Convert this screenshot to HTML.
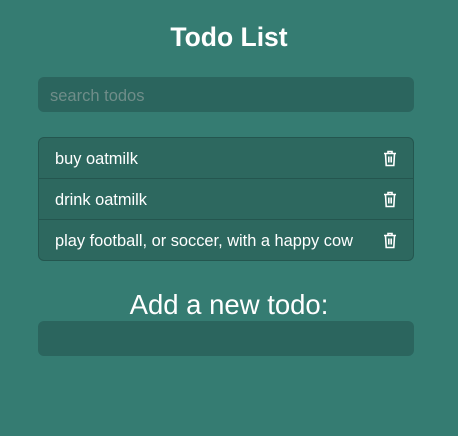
<!DOCTYPE html>
<html><head><style>
body{margin:0;width:458px;height:436px;background:#357c72;font-family:"Liberation Sans",sans-serif;color:#fff;position:relative;overflow:hidden}
h1{position:absolute;top:19px;left:0;width:458px;text-align:center;margin:0;font-size:26.5px;font-weight:bold;line-height:36px}
.inp{position:absolute;left:38px;width:376px;height:35px;background:#2b655e;border-radius:6px;box-sizing:border-box}
.ph{color:#6f8d89;font-size:16.5px;line-height:38px;padding-left:12px}
.list{position:absolute;left:38px;top:137px;width:376px;height:124px;background:#2d685f;border:1px solid #24564f;border-radius:6px;box-sizing:border-box}
.row{height:41px;border-bottom:1px solid #24564f;box-sizing:border-box;position:relative;font-size:16.4px;line-height:43px;padding-left:16px}
.row:last-child{border-bottom:none}
.row svg{position:absolute;right:16px;top:12px}
h2{position:absolute;top:289px;left:0;width:458px;text-align:center;margin:0;font-size:27.5px;font-weight:normal;line-height:32px}
</style></head><body>
<h1>Todo List</h1>
<div class="inp" style="top:77px"><div class="ph">search todos</div></div>
<div class="list">
<div class="row">buy oatmilk<svg width="14" height="17" viewBox="0 0 14 17" fill="none" stroke="#fff" stroke-width="1.6"><path d="M1 3.5h12M5 3.5V1.5h4v2M2.5 3.5l.7 12h7.6l.7-12M5.8 6.5v6M8.2 6.5v6"/></svg></div>
<div class="row">drink oatmilk<svg width="14" height="17" viewBox="0 0 14 17" fill="none" stroke="#fff" stroke-width="1.6"><path d="M1 3.5h12M5 3.5V1.5h4v2M2.5 3.5l.7 12h7.6l.7-12M5.8 6.5v6M8.2 6.5v6"/></svg></div>
<div class="row">play football, or soccer, with a happy cow<svg width="14" height="17" viewBox="0 0 14 17" fill="none" stroke="#fff" stroke-width="1.6"><path d="M1 3.5h12M5 3.5V1.5h4v2M2.5 3.5l.7 12h7.6l.7-12M5.8 6.5v6M8.2 6.5v6"/></svg></div>
</div>
<h2>Add a new todo:</h2>
<div class="inp" style="top:321px"></div>
</body></html>
